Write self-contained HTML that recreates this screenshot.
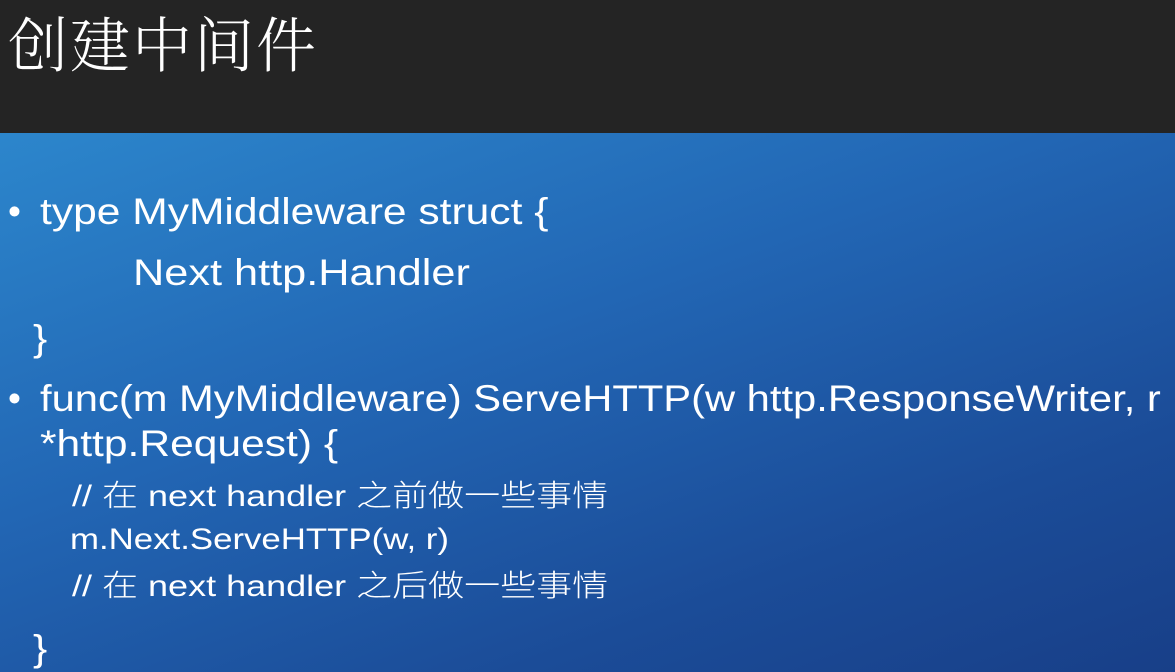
<!DOCTYPE html><html><head><meta charset="utf-8"><style>
body{margin:0;width:1175px;height:672px;overflow:hidden;position:relative;font-family:"Liberation Sans","Noto Sans CJK SC",sans-serif;color:#fff}
.h{position:absolute;left:0;top:0;width:1175px;height:133px;background:#242424}
.b{position:absolute;left:0;top:133px;width:1175px;height:539px;background:linear-gradient(160deg,#2c86cc 0%,#2266b4 40%,#1b4c98 75%,#183f88 100%)}
.t{position:absolute;left:8px;top:2px;font-family:"Noto Serif CJK SC",serif;font-size:60px;font-weight:300;letter-spacing:2px;line-height:80px}
.l{position:absolute;white-space:nowrap;line-height:1;transform-origin:left center}
.L{font-size:37px;transform:scaleX(1.15)}.S{font-size:30px;transform:scaleX(1.2)}
.c{font-family:"Noto Sans CJK SC",sans-serif;font-weight:300}
</style></head><body>
<div class="h"></div><div class="b"></div>
<div class="t">创建中间件</div>
<div class="l" style="left:8px;top:193px;font-size:37px">•</div>
<div class="l L" style="left:40px;top:193px">type MyMiddleware struct {</div>
<div class="l L" style="left:133px;top:254px;transform:scaleX(1.17)">Next http.Handler</div>
<div class="l L" style="left:33px;top:320px">}</div>
<div class="l" style="left:8px;top:380px;font-size:37px">•</div>
<div class="l L" style="left:40px;top:380px;transform:scaleX(1.127)">func(m MyMiddleware) ServeHTTP(w http.ResponseWriter, r</div>
<div class="l L" style="left:40px;top:425px">*http.Request) {</div>
<div class="l S" style="left:72px;top:478px">// <span class="c">在</span> next handler <span class="c">之前做一些事情</span></div>
<div class="l S" style="left:70px;top:525px;transform:scaleX(1.16)">m.Next.ServeHTTP(w, r)</div>
<div class="l S" style="left:72px;top:568px">// <span class="c">在</span> next handler <span class="c">之后做一些事情</span></div>
<div class="l L" style="left:33px;top:630px">}</div>
</body></html>
